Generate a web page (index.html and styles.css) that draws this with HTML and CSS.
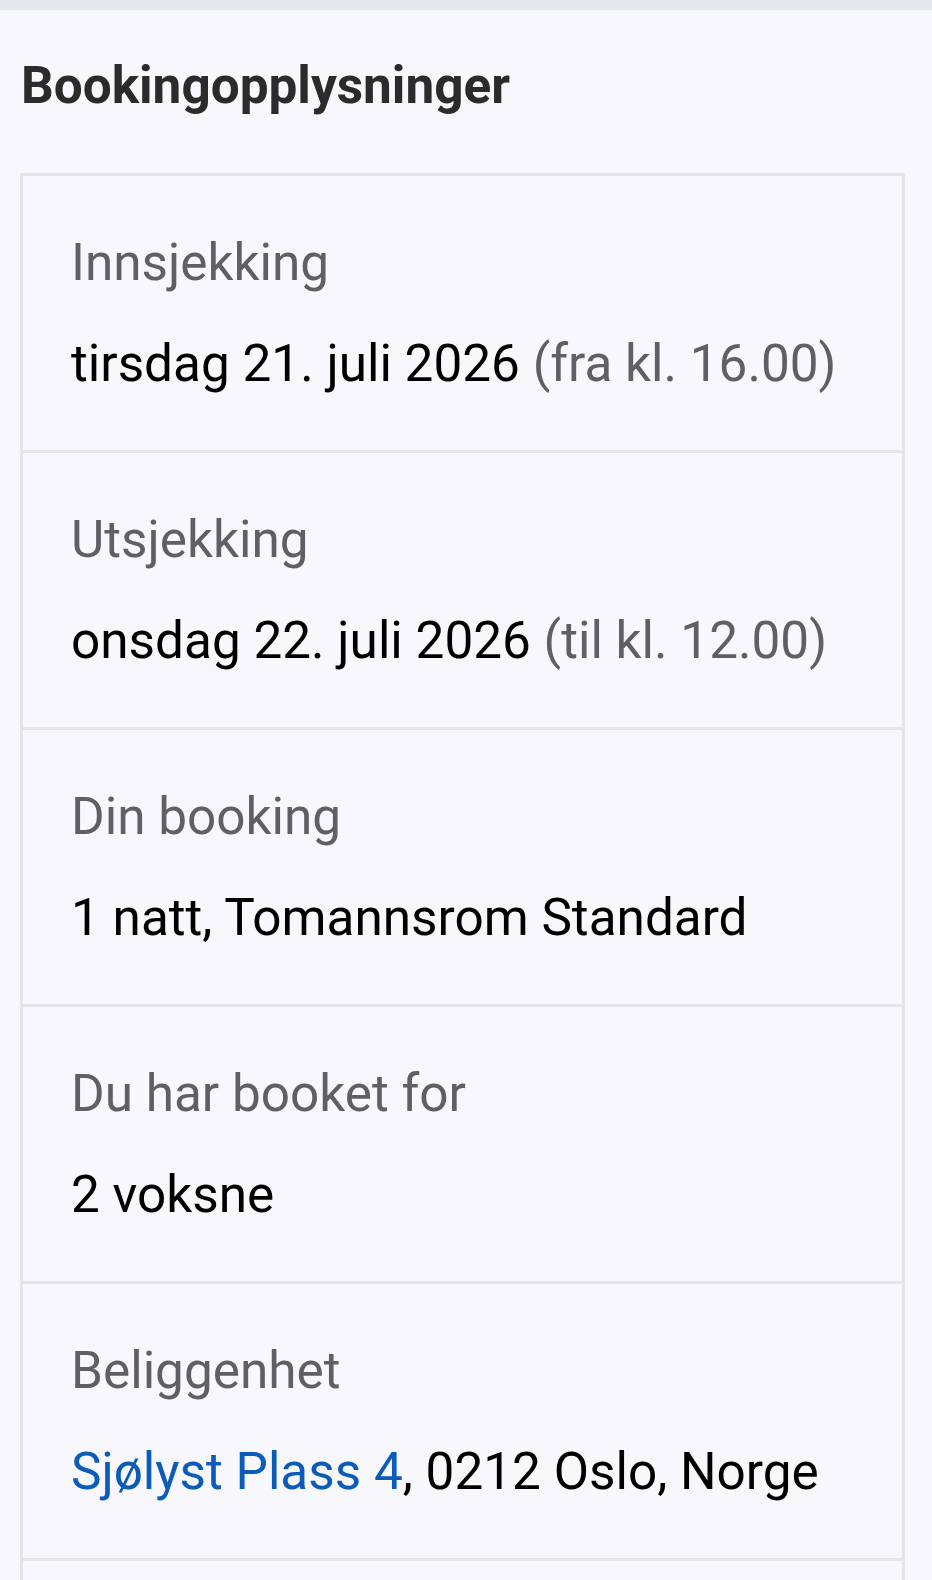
FILE: index.html
```html
<!DOCTYPE html>
<html lang="no">
<head>
<meta charset="utf-8">
<title>Bookingopplysninger</title>
<link rel="stylesheet" href="styles.css">
</head>
<body>
<div class="topbar"></div>
<main class="page">
  <h1 class="title">Bookingopplysninger</h1>
  <dl class="details">
    <div class="row">
      <dt class="label">Innsjekking</dt>
      <dd class="value">tirsdag 21. juli 2026 <span class="muted">(fra kl. 16.00)</span></dd>
    </div>
    <div class="row">
      <dt class="label">Utsjekking</dt>
      <dd class="value">onsdag 22. juli 2026 <span class="muted">(til kl. 12.00)</span></dd>
    </div>
    <div class="row">
      <dt class="label">Din booking</dt>
      <dd class="value">1 natt, Tomannsrom Standard</dd>
    </div>
    <div class="row">
      <dt class="label">Du har booket for</dt>
      <dd class="value">2 voksne</dd>
    </div>
    <div class="row">
      <dt class="label">Beliggenhet</dt>
      <dd class="value"><a class="link" href="#">Sjølyst Plass 4</a>, 0212 Oslo, Norge</dd>
    </div>
    <div class="row row-more"></div>
  </dl>
</main>
</body>
</html>
```

FILE: styles.css
```css
html, body {
  margin: 0;
  padding: 0;
  background: #f7f7fc;
}

body {
  font-family: Roboto, "Liberation Sans", sans-serif;
  font-size: 51.3px;
  line-height: 61px;
  color: #000;
}

.topbar {
  height: 10px;
  background: #e6e6ed;
}

.page {
  padding: 45px 27px 0 20px;
}

.title {
  margin: 0 0 57px 1px;
  font-size: 51.3px;
  line-height: 61px;
  font-weight: 700;
  color: #2b2b2b;
}

.details {
  margin: 0;
  border: 3px solid #e4e4ea;
  border-radius: 3px;
}

.row {
  padding: 56px 48px 56px 48px;
}

.row + .row {
  border-top: 3px solid #e4e4ea;
}

.row-more {
  min-height: 162px;
}

.label {
  margin: 0 0 40px 0;
  color: #5f5f64;
  font-weight: 400;
}

.value {
  margin: 0;
  color: #000;
}

.muted {
  color: #5f5f64;
}

.link {
  color: #0a5cb8;
  text-decoration: none;
}
```
